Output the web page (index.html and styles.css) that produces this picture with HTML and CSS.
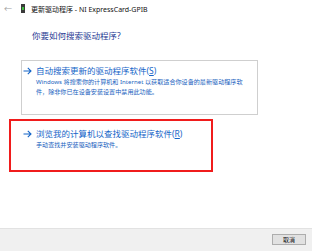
FILE: index.html
```html
<!DOCTYPE html>
<html lang="zh-CN">
<head>
    <meta charset="UTF-8">
    <meta name="viewport" content="width=device-width, initial-scale=1.0">
    <title>更新驱动程序 - NI ExpressCard-GPIB</title>
    <link rel="stylesheet" href="styles.css">
</head>
<body>
    <div class="window">
        <!-- Title bar -->
        <div class="titlebar">
            <span class="back">&#8592;</span>
            <svg class="app-icon" width="4" height="9" viewBox="0 0 4 9">
                <rect x="0" y="0" width="4" height="9" fill="#3a3a3a"/>
                <rect x="1" y="3" width="2" height="3" fill="#3fbf3f"/>
            </svg>
            <span class="title">更新驱动程序 - NI ExpressCard-GPIB</span>
        </div>

        <div class="content">
            <h1>你要如何搜索驱动程序?</h1>

            <div class="option option-auto">
                <svg class="arrow" width="9" height="8" viewBox="0 0 9 8">
                    <path d="M0.5 4H8M4.8 0.8L8 4L4.8 7.2" fill="none" stroke="#1565c8" stroke-width="1.1"/>
                </svg>
                <div class="option-text">
                    <div class="option-title">自动搜索更新的驱动程序软件(<u>S</u>)</div>
                    <div class="option-desc">Windows 将搜索你的计算机和 Internet 以获取适合你设备的最新驱动程序软<br>件，除非你已在设备安装设置中禁用此功能。</div>
                </div>
            </div>

            <div class="option option-browse">
                <svg class="arrow" width="9" height="8" viewBox="0 0 9 8">
                    <path d="M0.5 4H8M4.8 0.8L8 4L4.8 7.2" fill="none" stroke="#1565c8" stroke-width="1.1"/>
                </svg>
                <div class="option-text">
                    <div class="option-title">浏览我的计算机以查找驱动程序软件(<u>R</u>)</div>
                    <div class="option-desc">手动查找并安装驱动程序软件。</div>
                </div>
            </div>
        </div>

        <div class="footer">
            <button class="btn">取消</button>
        </div>
    </div>
</body>
</html>
```

FILE: styles.css
```css
body {
    margin: 0;
    padding: 0;
    background-color: #fff;
    font-family: "Noto Sans", "Noto Sans CJK SC", sans-serif;
}
.window {
    width: 312px;
    height: 251px;
    display: flex;
    flex-direction: column;
    overflow: hidden;
}
.titlebar {
    height: 17px;
    display: flex;
    align-items: center;
    padding-left: 4px;
}
.back {
    color: #a0a0a0;
    font-size: 8px;
    width: 17px;
}
.app-icon {
    margin-right: 6px;
}
.title {
    font-size: 7px;
    color: #111;
}
.content {
    flex: 1;
    padding-left: 21px;
}
h1 {
    margin: 13px 0 18px 11px;
    font-size: 8.5px;
    line-height: 12px;
    font-weight: normal;
    color: #1f3a93;
}
.option {
    display: flex;
    box-sizing: border-box;
}
.option-auto {
    width: 237px;
    height: 55px;
    border: 1px solid #cfcfcf;
    padding: 5px 0 0 1px;
}
.option-browse {
    width: 204px;
    height: 53px;
    margin: 4px 0 0 -12px;
    border: 2px solid #f01c1c;
    padding: 8px 0 0 12px;
}
.arrow {
    margin-top: 1px;
    margin-right: 4px;
}
.option-title {
    font-size: 8.5px;
    line-height: 10px;
    color: #1565c8;
}
.option-desc {
    font-size: 6.1px;
    line-height: 10px;
    color: #1a5fc0;
    margin-top: 1px;
}
.footer {
    height: 23px;
    background-color: #f0f0f0;
    border-top: 1px solid #e2e2e2;
    display: flex;
    justify-content: flex-end;
    align-items: flex-start;
    padding: 5px 6px 0 0;
    box-sizing: border-box;
}
.btn {
    width: 34px;
    height: 11px;
    padding: 0;
    font-family: "Noto Sans CJK SC", sans-serif;
    font-size: 6px;
    line-height: 9px;
    color: #111;
    background-color: #e1e1e1;
    border: 1px solid #adadad;
}
```
